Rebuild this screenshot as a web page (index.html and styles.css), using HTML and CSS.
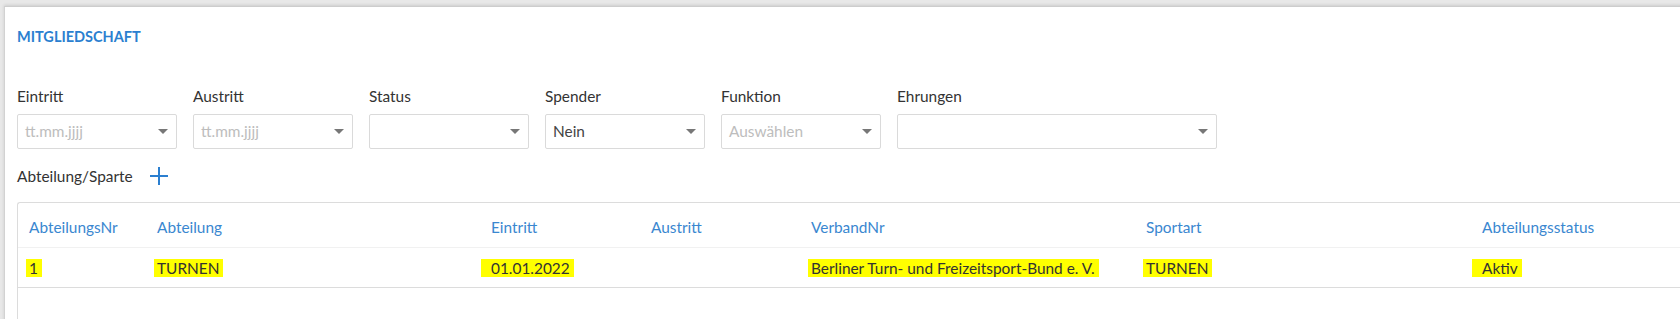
FILE: index.html
```html
<!DOCTYPE html>
<html lang="de">
<head>
    <meta charset="UTF-8">
    <meta name="viewport" content="width=device-width, initial-scale=1.0">
    <title>Mitgliedschaft</title>
    <link rel="stylesheet" href="styles.css">
</head>
<body>
    <div class="panel">
        <h2 class="panel__title">MITGLIEDSCHAFT</h2>

        <div class="fields">
            <div class="field">
                <label class="field__label">Eintritt</label>
                <div class="select">
                    <span class="select__value select__value--empty">tt.mm.jjjj</span>
                    <span class="select__caret"></span>
                </div>
            </div>
            <div class="field">
                <label class="field__label">Austritt</label>
                <div class="select">
                    <span class="select__value select__value--empty">tt.mm.jjjj</span>
                    <span class="select__caret"></span>
                </div>
            </div>
            <div class="field">
                <label class="field__label">Status</label>
                <div class="select">
                    <span class="select__value"></span>
                    <span class="select__caret"></span>
                </div>
            </div>
            <div class="field">
                <label class="field__label">Spender</label>
                <div class="select">
                    <span class="select__value">Nein</span>
                    <span class="select__caret"></span>
                </div>
            </div>
            <div class="field">
                <label class="field__label">Funktion</label>
                <div class="select">
                    <span class="select__value select__value--empty">Auswählen</span>
                    <span class="select__caret"></span>
                </div>
            </div>
            <div class="field field--wide">
                <label class="field__label">Ehrungen</label>
                <div class="select">
                    <span class="select__value"></span>
                    <span class="select__caret"></span>
                </div>
            </div>
        </div>

        <div class="subhead">
            <span class="subhead__text">Abteilung/Sparte</span>
            <button class="add-btn" type="button" aria-label="Hinzufügen">
                <svg width="18" height="18" viewBox="0 0 18 18">
                    <path d="M9 0V18M0 9H18" stroke="#2b7fd0" stroke-width="2" fill="none"/>
                </svg>
            </button>
        </div>

        <div class="grid-box">
            <table class="grid">
                <colgroup>
                    <col class="col-nr">
                    <col class="col-abt">
                    <col class="col-date">
                    <col class="col-date">
                    <col class="col-verband">
                    <col class="col-sport">
                    <col>
                </colgroup>
                <thead>
                    <tr>
                        <th>AbteilungsNr</th>
                        <th>Abteilung</th>
                        <th>Eintritt</th>
                        <th>Austritt</th>
                        <th>VerbandNr</th>
                        <th>Sportart</th>
                        <th>Abteilungsstatus</th>
                    </tr>
                </thead>
                <tbody>
                    <tr>
                        <td><span class="mark">1</span></td>
                        <td><span class="mark">TURNEN</span></td>
                        <td><span class="mark mark--lead">01.01.2022</span></td>
                        <td></td>
                        <td><span class="mark">Berliner Turn- und Freizeitsport-Bund e. V.</span></td>
                        <td><span class="mark">TURNEN</span></td>
                        <td><span class="mark mark--lead">Aktiv</span></td>
                    </tr>
                </tbody>
            </table>
        </div>
    </div>
</body>
</html>
```

FILE: styles.css
```css
html, body {
    margin: 0;
    padding: 0;
    overflow: hidden;
}

body {
    background: #e8e8e8;
    padding: 6px 0 0 4px;
    font-family: Lato, "Liberation Sans", sans-serif;
    font-size: 15.4px;
    color: #333;
}

.panel {
    width: calc(100% + 20px);
    background: #fff;
    border-top: 1px solid #cdcdcd;
    border-left: 1px solid #d2d2d2;
    box-shadow: 0 -1px 3px rgba(0,0,0,0.12);
    padding: 20px 12px 0;
    box-sizing: border-box;
}

.panel__title {
    margin: 0;
    font-size: 14.5px;
    line-height: 20px;
    font-weight: 700;
    color: #2b7fd0;
}

.fields {
    display: grid;
    grid-template-columns: repeat(5, 160px) 320px;
    column-gap: 16px;
    margin-top: 39px;
}

.field__label {
    display: block;
    line-height: 20px;
    margin-bottom: 8px;
    color: #333;
}

.select {
    height: 35px;
    box-sizing: border-box;
    border: 1px solid #dadada;
    border-radius: 2px;
    display: flex;
    align-items: center;
    justify-content: space-between;
    padding: 0 8px 0 7px;
}

.select__value {
    line-height: 33px;
    color: #444;
}

.select__value--empty {
    color: #bdbdbd;
}

.select__caret {
    width: 0;
    height: 0;
    border-left: 5px solid transparent;
    border-right: 5px solid transparent;
    border-top: 5px solid #777;
}

.subhead {
    display: flex;
    align-items: center;
    gap: 17px;
    margin-top: 17px;
    line-height: 20px;
}

.add-btn {
    border: 0;
    padding: 0;
    background: none;
    display: flex;
    cursor: pointer;
}

.grid-box {
    margin-top: 16px;
    border-top: 1px solid #dcdcdc;
    border-left: 1px solid #dcdcdc;
    border-top-left-radius: 3px;
    padding-bottom: 80px;
}

.grid {
    table-layout: fixed;
    width: 1700px;
    border-collapse: separate;
    border-spacing: 0;
}

.col-nr { width: 128px; }
.col-abt { width: 334px; }
.col-date { width: 160px; }
.col-verband { width: 335px; }
.col-sport { width: 336px; }

.grid th {
    text-align: left;
    font-weight: 400;
    color: #3a87d0;
    line-height: 20px;
    padding: 14px 11px 10px;
    border-bottom: 1px solid #f1f1f1;
}

.grid td {
    line-height: 20px;
    padding: 10px 11px 9px;
    border-bottom: 1px solid #dcdcdc;
    color: #333;
    white-space: nowrap;
}

.mark {
    background: #ffff00;
    padding: 0 4px 0 3px;
    margin-left: -3px;
}

.mark--lead {
    padding-left: 10px;
    margin-left: -10px;
}
```
